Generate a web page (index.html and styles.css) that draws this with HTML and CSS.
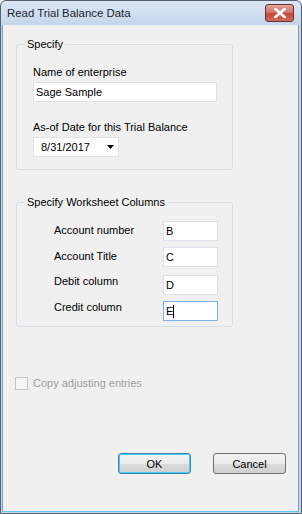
FILE: index.html
```html
<!DOCTYPE html>
<html lang="en">
<head>
  <meta charset="UTF-8" />
  <title>Read Trial Balance Data</title>
  <link rel="stylesheet" href="styles.css">
</head>
<body>

<div class="window">

  <div class="titlebar">
    <span class="title">Read Trial Balance Data</span>
    <span class="close-btn">
      <svg width="12" height="10" viewBox="0 0 12 10">
        <path d="M1.5 1 L10.5 9 M10.5 1 L1.5 9" stroke="#ffffff" stroke-width="2.6" stroke-linecap="square"/>
      </svg>
    </span>
  </div>

  <div class="client">

    <fieldset class="group">
      <legend>Specify</legend>
      <div class="group-body specify-body">
        <div class="label">Name of enterprise</div>
        <div class="textbox wide">Sage Sample</div>

        <div class="label spaced">As-of Date for this Trial Balance</div>
        <div class="datebox">
          <span>8/31/2017</span>
          <svg width="7" height="4" viewBox="0 0 7 4"><path d="M0 0 H7 L3.5 4 Z" fill="#000"/></svg>
        </div>
      </div>
    </fieldset>

    <fieldset class="group group-columns">
      <legend>Specify Worksheet Columns</legend>
      <div class="group-body columns-body">
        <div class="col-row">
          <span class="col-label">Account number</span>
          <div class="textbox short">B</div>
        </div>
        <div class="col-row">
          <span class="col-label">Account Title</span>
          <div class="textbox short">C</div>
        </div>
        <div class="col-row tight extra-gap">
          <span class="col-label">Debit column</span>
          <div class="textbox short">D</div>
        </div>
        <div class="col-row tight">
          <span class="col-label">Credit column</span>
          <div class="textbox short focused">E<span class="caret"></span></div>
        </div>
      </div>
    </fieldset>

    <div class="check-row">
      <span class="checkbox"></span>
      <span class="check-label">Copy adjusting entries</span>
    </div>

    <div class="buttons">
      <button class="default">OK</button>
      <button>Cancel</button>
    </div>

  </div>
</div>

</body>
</html>
```

FILE: styles.css
```css
body {
  margin: 0;
  padding: 0;
  background-color: #ffffff;
  font-family: "Liberation Sans", Arial, sans-serif;
  font-size: 11px;
  line-height: 13px;
  color: #000;
}

.window {
  width: 302px;
  height: 514px;
  box-sizing: border-box;
  border: 1px solid #57606e;
  border-radius: 6px 6px 0 0;
  background: linear-gradient(to bottom, #dbe6f4 0px, #c4d6ec 24px, #c2d7ee 100%);
  display: flex;
  flex-direction: column;
}

.titlebar {
  height: 24px;
  display: flex;
  align-items: center;
  padding-left: 6px;
  flex-shrink: 0;
}

.title {
  flex: 1;
  font-size: 11.4px;
  color: #1e1e2c;
  margin-top: 1px;
}

.close-btn {
  width: 27px;
  height: 16px;
  margin-right: 7px;
  align-self: flex-start;
  margin-top: 3px;
  border: 1px solid #6d2d32;
  border-radius: 3px;
  background: linear-gradient(to bottom, #e3a49c 0%, #d2766c 45%, #c2493c 55%, #d06d5a 100%);
  display: flex;
  align-items: center;
  justify-content: center;
}

.client {
  flex: 1;
  margin: 0 2px 1px 1px;
  border-left: 1px solid #7d9cc4;
  border-right: 1px solid #7d9cc4;
  border-bottom: 1px solid #5cc9ea;
  background-color: #f0f0f0;
  padding: 13px 0 0 13px;
  display: flex;
  flex-direction: column;
}

.group {
  width: 217px;
  box-sizing: border-box;
  margin: 0;
  padding: 0;
  border: 1px solid #d5dfe5;
  border-radius: 3px;
}

.group legend {
  margin-left: 8px;
  padding: 0 2px;
  font-size: 11px;
  line-height: 13px;
}

.group-columns {
  margin-top: 26px;
}

.specify-body {
  padding: 15px 14px 12px 16px;
}

.label {
  margin-bottom: 3px;
}

.label.spaced {
  margin-top: 19px;
}

.textbox {
  height: 20px;
  box-sizing: border-box;
  border: 1px solid #dde2e8;
  background-color: #fff;
  padding-left: 2px;
  display: flex;
  align-items: center;
}

.textbox.wide {
  width: 184px;
}

.textbox.short {
  width: 55px;
}

.textbox.focused {
  border-color: #7eb4ea;
}

.caret {
  width: 1px;
  height: 13px;
  background-color: #000;
}

.datebox {
  width: 86px;
  height: 20px;
  box-sizing: border-box;
  border: 1px solid #e2e4e8;
  background-color: #fff;
  padding: 0 4px 0 7px;
  display: flex;
  align-items: center;
  justify-content: space-between;
}

.columns-body {
  padding: 12px 14px 5px 37px;
  display: flex;
  flex-direction: column;
  gap: 6px;
}

.col-row {
  display: flex;
  align-items: flex-start;
}

.col-row.extra-gap {
  margin-top: 2px;
}

.col-label {
  width: 109px;
  padding-top: 3px;
}

.col-row.tight .col-label {
  padding-top: 0;
}

.check-row {
  margin-top: 50px;
  margin-left: -1px;
  display: flex;
  align-items: center;
  gap: 5px;
}

.checkbox {
  width: 13px;
  height: 13px;
  box-sizing: border-box;
  border: 1px solid #c4c4c4;
  background: linear-gradient(to bottom, #f3f3f3, #f8f8f8);
}

.check-label {
  color: #a0a0a0;
}

.buttons {
  margin-top: 63px;
  padding-right: 12px;
  display: flex;
  justify-content: flex-end;
  gap: 22px;
}

button {
  width: 73px;
  height: 21px;
  box-sizing: border-box;
  border: 1px solid #707070;
  border-radius: 3px;
  background: linear-gradient(to bottom, #f2f2f2 0%, #ebebeb 50%, #dddddd 51%, #cfcfcf 100%);
  font-family: "Liberation Sans", Arial, sans-serif;
  font-size: 11px;
  color: #000;
  padding: 0;
}

button.default {
  border-color: #3c7fb1;
  box-shadow: inset 0 0 0 1px #48d0f4;
}
```
